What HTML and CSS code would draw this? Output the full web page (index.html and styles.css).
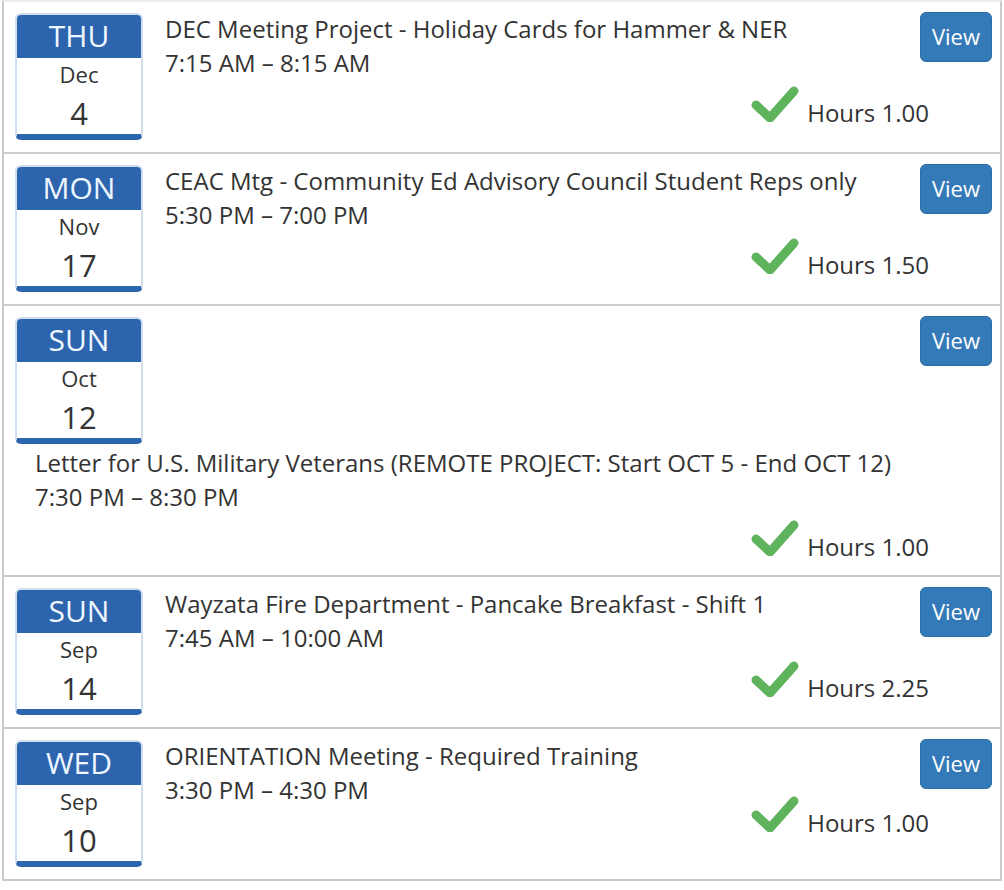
FILE: index.html
```html
<!DOCTYPE html>
<html lang="en">
<head>
<meta charset="utf-8">
<title>Events</title>
<link rel="stylesheet" href="styles.css">
</head>
<body>
<div class="list">
  <div class="item">
    <div class="cal"><div class="cal-dow">THU</div><div class="cal-mon">Dec</div><div class="cal-day">4</div></div>
    <a class="view">View</a>
    <div class="info">
      <div class="title">DEC Meeting Project - Holiday Cards for Hammer &amp; NER</div>
      <div class="time">7:15 AM – 8:15 AM</div>
    </div>
    <div class="hours"><svg class="check" viewBox="0 0 48 36"><polyline points="5,19 19,32 43,5"/></svg><span>Hours 1.00</span></div>
  </div>
  <div class="item">
    <div class="cal"><div class="cal-dow">MON</div><div class="cal-mon">Nov</div><div class="cal-day">17</div></div>
    <a class="view">View</a>
    <div class="info">
      <div class="title">CEAC Mtg - Community Ed Advisory Council Student Reps only</div>
      <div class="time">5:30 PM – 7:00 PM</div>
    </div>
    <div class="hours"><svg class="check" viewBox="0 0 48 36"><polyline points="5,19 19,32 43,5"/></svg><span>Hours 1.50</span></div>
  </div>
  <div class="item">
    <div class="cal"><div class="cal-dow">SUN</div><div class="cal-mon">Oct</div><div class="cal-day">12</div></div>
    <a class="view">View</a>
    <div class="info">
      <div class="title">Letter for U.S. Military Veterans (REMOTE PROJECT: Start OCT 5 - End OCT 12)</div>
      <div class="time">7:30 PM – 8:30 PM</div>
    </div>
    <div class="hours"><svg class="check" viewBox="0 0 48 36"><polyline points="5,19 19,32 43,5"/></svg><span>Hours 1.00</span></div>
  </div>
  <div class="item">
    <div class="cal"><div class="cal-dow">SUN</div><div class="cal-mon">Sep</div><div class="cal-day">14</div></div>
    <a class="view">View</a>
    <div class="info">
      <div class="title">Wayzata Fire Department - Pancake Breakfast - Shift 1</div>
      <div class="time">7:45 AM – 10:00 AM</div>
    </div>
    <div class="hours"><svg class="check" viewBox="0 0 48 36"><polyline points="5,19 19,32 43,5"/></svg><span>Hours 2.25</span></div>
  </div>
  <div class="item">
    <div class="cal"><div class="cal-dow">WED</div><div class="cal-mon">Sep</div><div class="cal-day">10</div></div>
    <a class="view">View</a>
    <div class="info">
      <div class="title">ORIENTATION Meeting - Required Training</div>
      <div class="time">3:30 PM – 4:30 PM</div>
    </div>
    <div class="hours hours-tight"><svg class="check" viewBox="0 0 48 36"><polyline points="5,19 19,32 43,5"/></svg><span>Hours 1.00</span></div>
  </div>
</div>
</body>
</html>
```
FILE: styles.css
```css
html, body {
  margin: 0;
  padding: 0;
  background: #fff;
}
body {
  font-family: "Open Sans", "Noto Sans", "Liberation Sans", sans-serif;
  color: #333;
  font-size: 24px;
  line-height: 34px;
}
.list {
  margin: 0 2px 0 2px;
}
.item {
  border: 2px solid #cbcbcb;
  border-top: none;
  padding: 11px 8px 9px 11px;
}
.item:first-child {
  border-top: 2px solid #ececec;
}
.item::after {
  content: "";
  display: block;
  clear: both;
}
.cal {
  float: left;
  width: 128px;
  box-sizing: border-box;
  border: 2px solid #cfdeee;
  border-bottom: 6px solid #2d64ae;
  border-radius: 6px;
  overflow: hidden;
  text-align: center;
  margin: 0 2px 3px 0;
  background: #fff;
}
.cal-dow {
  background: #2d64ae;
  color: #eef6ff;
  font-size: 30px;
  height: 43px;
  line-height: 41px;
  margin: -2px -2px 0;
  padding-top: 2px;
}
.cal-mon {
  font-size: 22px;
  height: 36px;
  line-height: 33px;
}
.cal-day {
  font-size: 31px;
  height: 40px;
  line-height: 38px;
}
.view {
  float: right;
  width: 72px;
  height: 50px;
  box-sizing: border-box;
  margin-top: -1px;
  background: #347ab8;
  border: 1px solid #2e6da4;
  border-radius: 6px;
  color: #fff;
  font-size: 22px;
  line-height: 46px;
  text-align: center;
  text-decoration: none;
}
.info {
  display: inline-block;
  vertical-align: top;
  padding-left: 20px;
  margin-top: -1px;
}
.hours {
  text-align: right;
  margin: 6px 63px 2px 0;
}
.hours-tight {
  margin-top: -11px;
}
.check {
  width: 48px;
  height: 36px;
  margin-right: 8px;
  vertical-align: baseline;
}
.check polyline {
  fill: none;
  stroke: #5fb35d;
  stroke-width: 9;
  stroke-linecap: round;
  stroke-linejoin: round;
}
```
